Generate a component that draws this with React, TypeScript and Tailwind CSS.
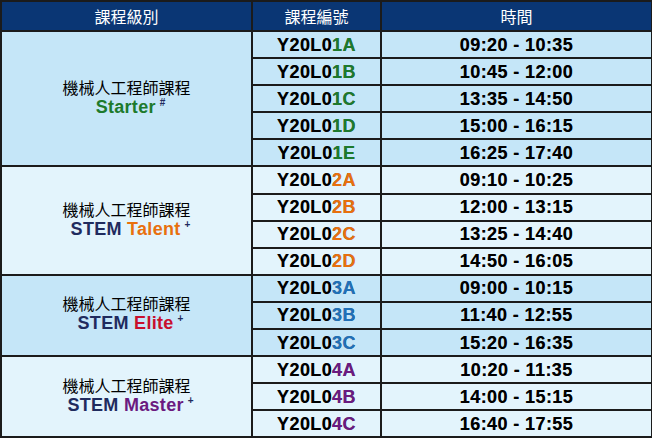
import React from 'react';

type Group = {
  level: string;
  prefix?: string;
  mark: string;
  levelColor: string;
  bg: string;
  codeColor: string;
  rows: { code: string; time: string }[];
};

const groups: Group[] = [
  {
    level: 'Starter',
    mark: '#',
    levelColor: 'text-[#1d7a2c]',
    bg: 'bg-[#c5e6f8]',
    codeColor: 'text-[#1d7a2c]',
    rows: [
      { code: '1A', time: '09:20 - 10:35' },
      { code: '1B', time: '10:45 - 12:00' },
      { code: '1C', time: '13:35 - 14:50' },
      { code: '1D', time: '15:00 - 16:15' },
      { code: '1E', time: '16:25 - 17:40' },
    ],
  },
  {
    level: 'Talent',
    prefix: 'STEM',
    mark: '+',
    levelColor: 'text-[#e8700e]',
    bg: 'bg-[#e3f4fc]',
    codeColor: 'text-[#e8700e]',
    rows: [
      { code: '2A', time: '09:10 - 10:25' },
      { code: '2B', time: '12:00 - 13:15' },
      { code: '2C', time: '13:25 - 14:40' },
      { code: '2D', time: '14:50 - 16:05' },
    ],
  },
  {
    level: 'Elite',
    prefix: 'STEM',
    mark: '+',
    levelColor: 'text-[#c8102e]',
    bg: 'bg-[#c5e6f8]',
    codeColor: 'text-[#1f70b8]',
    rows: [
      { code: '3A', time: '09:00 - 10:15' },
      { code: '3B', time: '11:40 - 12:55' },
      { code: '3C', time: '15:20 - 16:35' },
    ],
  },
  {
    level: 'Master',
    prefix: 'STEM',
    mark: '+',
    levelColor: 'text-[#6b1a80]',
    bg: 'bg-[#e3f4fc]',
    codeColor: 'text-[#6b1a80]',
    rows: [
      { code: '4A', time: '10:20 - 11:35' },
      { code: '4B', time: '14:00 - 15:15' },
      { code: '4C', time: '16:40 - 17:55' },
    ],
  },
];

const cjk = "font-['Noto_Sans_CJK_TC','Noto_Sans',sans-serif]";
const latin = "font-['Liberation_Sans',Arial,sans-serif]";
const cell = 'border-2 border-[#1b1b1b] text-center align-middle p-0';
const bold = `${latin} font-bold text-[18px] leading-none text-black tracking-[0.4px] [text-shadow:0_0_0.6px_rgba(0,0,0,0.6)]`;

export default function App() {
  return (
    <div className="w-[652px] h-[444px] bg-white">
      <table className="border-collapse w-[651px] table-fixed">
        <colgroup>
          <col className="w-[251px]" />
          <col className="w-[129px]" />
          <col className="w-[271px]" />
        </colgroup>
        <thead>
          <tr className="bg-[#0a3674] text-white">
            {['課程級別', '課程編號', '時間'].map((h) => (
              <th key={h} className={`${cell} ${cjk} h-[30px] text-[16px] font-normal leading-none`}>
                {h}
              </th>
            ))}
          </tr>
        </thead>
        <tbody>
          {groups.map((g) =>
            g.rows.map((r, i) => (
              <tr key={g.level + r.code} className={g.bg}>
                {i === 0 && (
                  <td rowSpan={g.rows.length} className={cell}>
                    <div className="flex flex-col items-center gap-[1px] pb-[3px]">
                      <span className={`${cjk} text-[16px] leading-[19px] text-black`}>機械人工程師課程</span>
                      <div className="flex items-start ml-[8px]">
                        <span className={`${latin} font-bold text-[18px] leading-[19px] tracking-[0.3px] whitespace-nowrap`}>
                          {g.prefix && <span className="text-[#1f2b5e]">{g.prefix} </span>}
                          <span className={g.levelColor}>{g.level}</span>
                        </span>
                        <span className={`${latin} font-bold text-[10px] leading-[10px] text-[#1f2b5e] ml-[4px]`}>
                          {g.mark}
                        </span>
                      </div>
                    </div>
                  </td>
                )}
                <td className={`${cell} ${bold} h-[27.1px]`}>
                  Y20L0<span className={g.codeColor}>{r.code}</span>
                </td>
                <td className={`${cell} ${bold} h-[27.1px]`}>{r.time}</td>
              </tr>
            ))
          )}
        </tbody>
      </table>
    </div>
  );
}
